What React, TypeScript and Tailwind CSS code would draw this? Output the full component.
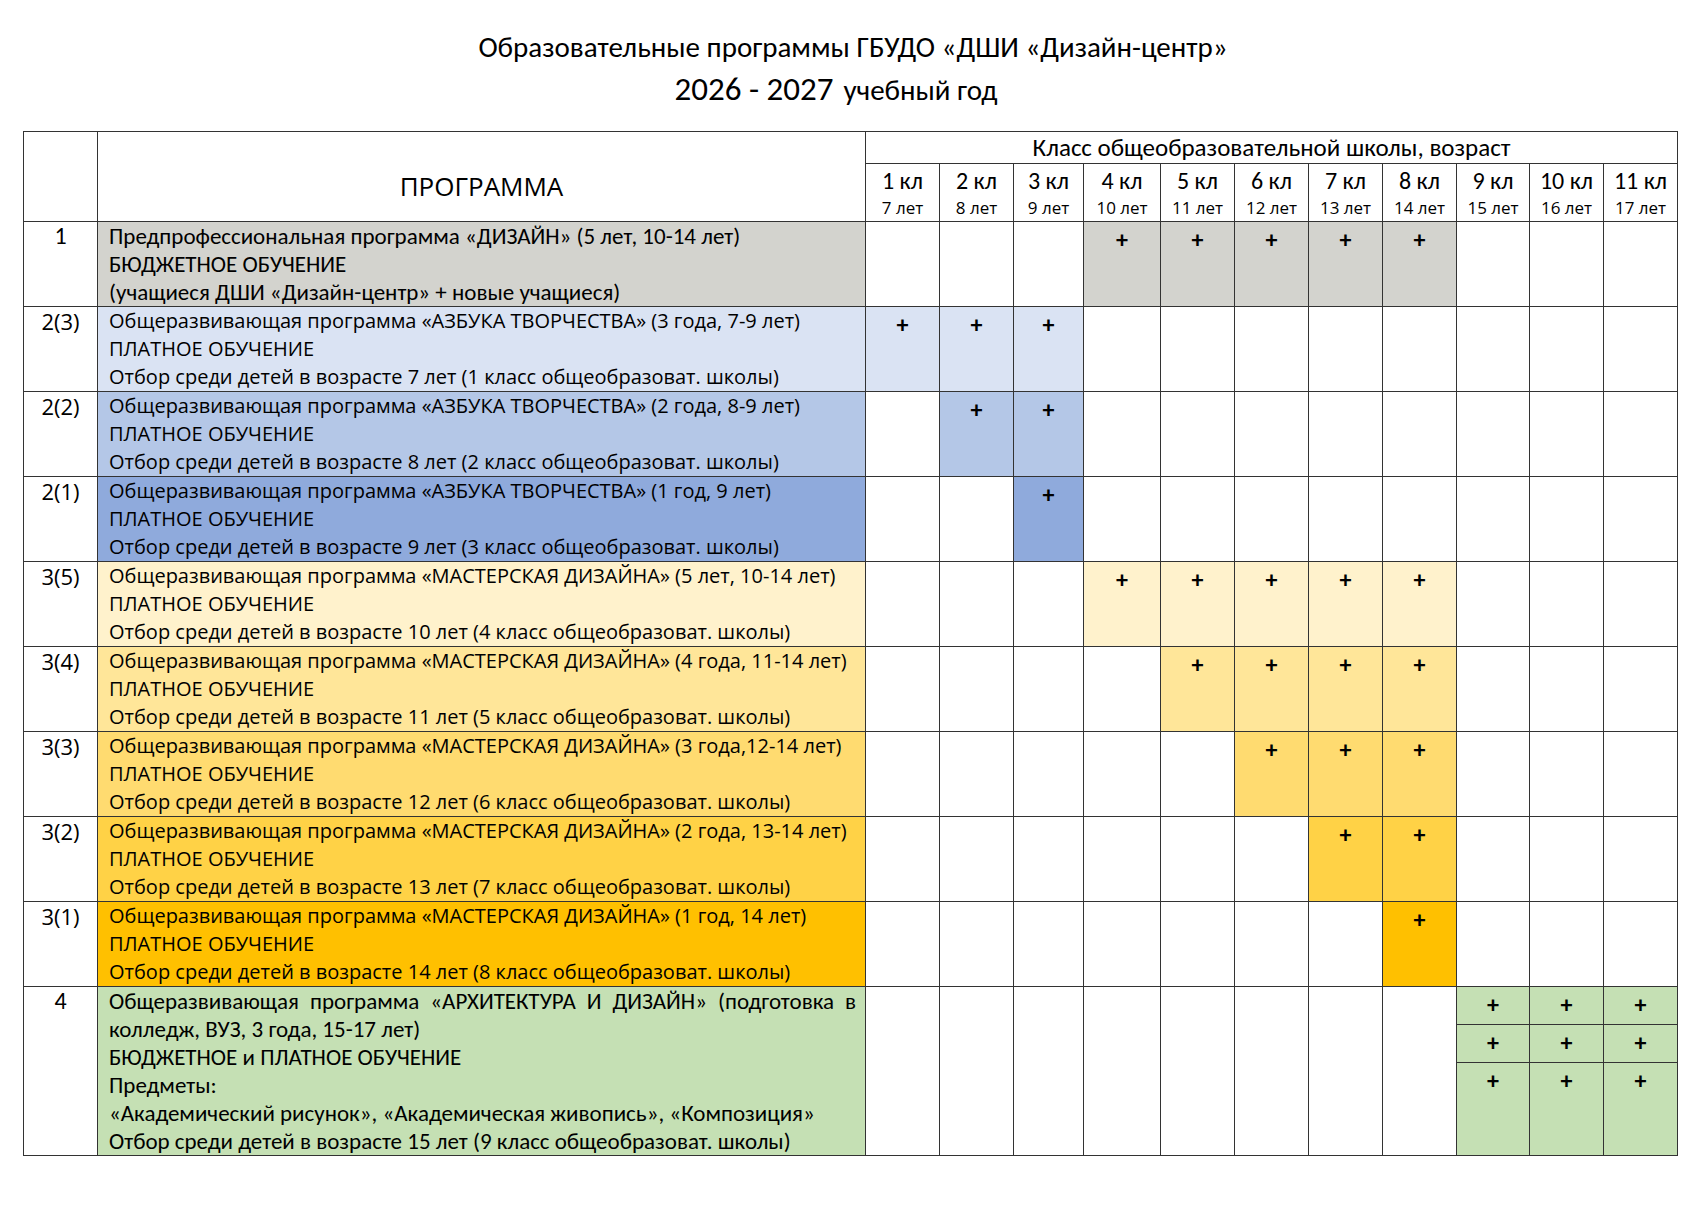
import type { ReactNode } from 'react'

const NARROW = "font-['Carlito','Liberation_Sans_Narrow','Liberation_Sans',sans-serif]"
const WIDE = "font-['Open_Sans',sans-serif]"

type Row = {
  num: string
  narrow?: boolean
  bg: string
  lines: string[]
  cols: number[]
}

const rows: Row[] = [
  {
    num: '1',
    narrow: true,
    bg: 'bg-[#d3d3ce]',
    lines: [
      'Предпрофессиональная программа «ДИЗАЙН» (5 лет, 10-14 лет)',
      'БЮДЖЕТНОЕ ОБУЧЕНИЕ',
      '(учащиеся ДШИ «Дизайн-центр» + новые учащиеся)',
    ],
    cols: [4, 5, 6, 7, 8],
  },
  {
    num: '2(3)',
    bg: 'bg-[#dae3f3]',
    lines: [
      'Общеразвивающая программа «АЗБУКА ТВОРЧЕСТВА» (3 года, 7-9 лет)',
      'ПЛАТНОЕ ОБУЧЕНИЕ',
      'Отбор среди детей в возрасте 7 лет (1 класс общеобразоват. школы)',
    ],
    cols: [1, 2, 3],
  },
  {
    num: '2(2)',
    bg: 'bg-[#b4c7e7]',
    lines: [
      'Общеразвивающая программа «АЗБУКА ТВОРЧЕСТВА» (2 года, 8-9 лет)',
      'ПЛАТНОЕ ОБУЧЕНИЕ',
      'Отбор среди детей в возрасте 8 лет (2 класс общеобразоват. школы)',
    ],
    cols: [2, 3],
  },
  {
    num: '2(1)',
    bg: 'bg-[#8faadc]',
    lines: [
      'Общеразвивающая программа «АЗБУКА ТВОРЧЕСТВА» (1 год, 9 лет)',
      'ПЛАТНОЕ ОБУЧЕНИЕ',
      'Отбор среди детей в возрасте 9 лет (3 класс общеобразоват. школы)',
    ],
    cols: [3],
  },
  {
    num: '3(5)',
    bg: 'bg-[#fff2cc]',
    lines: [
      'Общеразвивающая программа «МАСТЕРСКАЯ ДИЗАЙНА» (5 лет, 10-14 лет)',
      'ПЛАТНОЕ ОБУЧЕНИЕ',
      'Отбор среди детей в возрасте 10 лет (4 класс общеобразоват. школы)',
    ],
    cols: [4, 5, 6, 7, 8],
  },
  {
    num: '3(4)',
    bg: 'bg-[#ffe699]',
    lines: [
      'Общеразвивающая программа «МАСТЕРСКАЯ ДИЗАЙНА» (4 года, 11-14 лет)',
      'ПЛАТНОЕ ОБУЧЕНИЕ',
      'Отбор среди детей в возрасте 11 лет (5 класс общеобразоват. школы)',
    ],
    cols: [5, 6, 7, 8],
  },
  {
    num: '3(3)',
    bg: 'bg-[#ffdb70]',
    lines: [
      'Общеразвивающая программа «МАСТЕРСКАЯ ДИЗАЙНА» (3 года,12-14 лет)',
      'ПЛАТНОЕ ОБУЧЕНИЕ',
      'Отбор среди детей в возрасте 12 лет (6 класс общеобразоват. школы)',
    ],
    cols: [6, 7, 8],
  },
  {
    num: '3(2)',
    bg: 'bg-[#ffd246]',
    lines: [
      'Общеразвивающая программа «МАСТЕРСКАЯ ДИЗАЙНА» (2 года, 13-14 лет)',
      'ПЛАТНОЕ ОБУЧЕНИЕ',
      'Отбор среди детей в возрасте 13 лет (7 класс общеобразоват. школы)',
    ],
    cols: [7, 8],
  },
  {
    num: '3(1)',
    bg: 'bg-[#ffc000]',
    lines: [
      'Общеразвивающая программа «МАСТЕРСКАЯ ДИЗАЙНА» (1 год, 14 лет)',
      'ПЛАТНОЕ ОБУЧЕНИЕ',
      'Отбор среди детей в возрасте 14 лет (8 класс общеобразоват. школы)',
    ],
    cols: [8],
  },
]

const grades = [
  { kl: '1 кл', age: '7 лет' },
  { kl: '2 кл', age: '8 лет' },
  { kl: '3 кл', age: '9 лет' },
  { kl: '4 кл', age: '10 лет' },
  { kl: '5 кл', age: '11 лет' },
  { kl: '6 кл', age: '12 лет' },
  { kl: '7 кл', age: '13 лет' },
  { kl: '8 кл', age: '14 лет' },
  { kl: '9 кл', age: '15 лет' },
  { kl: '10 кл', age: '16 лет' },
  { kl: '11 кл', age: '17 лет' },
]

const gradeWidths = ['w-[74px]', 'w-[74px]', 'w-[70px]', 'w-[77px]', 'w-[74px]', 'w-[74px]', 'w-[74px]', 'w-[74px]', 'w-[73px]', 'w-[74px]', 'w-[74px]']

const line = 'border border-[#333333]'
const cell = `${line} p-0 align-top`

function Plus() {
  return <div className="pt-[4px] text-center text-[24px] font-semibold leading-[28px] text-black">+</div>
}

function Cell({ bg, children, className = '', rowSpan }: { bg?: string; children?: ReactNode; className?: string; rowSpan?: number }) {
  return (
    <td rowSpan={rowSpan} className={`${cell} ${bg ?? 'bg-white'} ${className}`}>
      {children}
    </td>
  )
}

export default function App() {
  return (
    <div className={`min-h-screen bg-white text-black ${NARROW}`}>
      <div className="pt-[30px] text-center">
        <p className="text-[29px] leading-[34px]">Образовательные программы ГБУДО «ДШИ «Дизайн-центр»</p>
        <p className="mt-[6px] pr-[34px] leading-[38px]">
          <span className="text-[33px]">2026 - 2027</span>
          <span className="ml-[10px] text-[29px]">учебный год</span>
        </p>
      </div>

      <div className="mt-[17px] pl-[23px]">
        <table className="w-[1654px] table-fixed border-collapse">
          <colgroup>
            <col className="w-[74px]" />
            <col className="w-[768px]" />
            {gradeWidths.map((w, i) => (
              <col key={i} className={w} />
            ))}
          </colgroup>
          <thead>
            <tr className="h-[32px]">
              <th rowSpan={2} className={`${line} bg-white`} />
              <th rowSpan={2} className={`${line} bg-white text-center align-middle text-[26px] font-normal ${WIDE}`}>
                <span className="relative top-[10px]">ПРОГРАММА</span>
              </th>
              <th colSpan={11} className={`${line} bg-white text-center align-middle text-[25px] font-normal leading-[30px]`}>
                Класс общеобразовательной школы, возраст
              </th>
            </tr>
            <tr className="h-[58px]">
              {grades.map((g) => (
                <th key={g.kl} className={`${line} bg-white px-0 text-center align-middle font-normal`}>
                  <div className="text-[24px] leading-[27px]">{g.kl}</div>
                  <div className={`pt-[3px] text-[17px] leading-[22px] ${WIDE}`}>{g.age}</div>
                </th>
              ))}
            </tr>
          </thead>
          <tbody>
            {rows.map((r) => {
              const font = r.narrow ? `${NARROW} text-[23px]` : `${WIDE} text-[20px]`
              return (
                <tr key={r.num} className="h-[84px]">
                  <Cell className={`text-center leading-[28px] ${r.narrow ? `${NARROW} text-[24px]` : `${WIDE} text-[22px]`}`}>
                    <div>{r.num}</div>
                  </Cell>
                  <Cell bg={r.bg} className={`px-[11px] leading-[28px] ${font}`}>
                    {r.lines.map((l) => (
                      <div key={l} className="whitespace-nowrap">
                        {l}
                      </div>
                    ))}
                  </Cell>
                  {grades.map((_, i) => {
                    const on = r.cols.includes(i + 1)
                    return (
                      <Cell key={i} bg={on ? r.bg : undefined}>
                        {on ? <Plus /> : null}
                      </Cell>
                    )
                  })}
                </tr>
              )
            })}

            <tr className="h-[38px]">
              <Cell rowSpan={3} className="text-center text-[24px] leading-[28px]">
                <div>4</div>
              </Cell>
              <Cell rowSpan={3} bg="bg-[#c5e0b4]" className="px-[11px] pr-[9px] text-[23px] leading-[28px]">
                <div className="text-justify [text-align-last:justify]">
                  Общеразвивающая программа «АРХИТЕКТУРА И ДИЗАЙН» (подготовка в
                </div>
                <div>колледж, ВУЗ, 3 года, 15-17 лет)</div>
                <div>БЮДЖЕТНОЕ и ПЛАТНОЕ ОБУЧЕНИЕ</div>
                <div>Предметы:</div>
                <div className="whitespace-nowrap">«Академический рисунок», «Академическая живопись», «Композиция»</div>
                <div className="whitespace-nowrap">Отбор среди детей в возрасте 15 лет (9 класс общеобразоват. школы)</div>
              </Cell>
              {Array.from({ length: 8 }).map((_, i) => (
                <Cell key={i} rowSpan={3} />
              ))}
              {[0, 1, 2].map((i) => (
                <Cell key={i} bg="bg-[#c5e0b4]">
                  <Plus />
                </Cell>
              ))}
            </tr>
            <tr className="h-[38px]">
              {[0, 1, 2].map((i) => (
                <Cell key={i} bg="bg-[#c5e0b4]">
                  <Plus />
                </Cell>
              ))}
            </tr>
            <tr className="h-[92px]">
              {[0, 1, 2].map((i) => (
                <Cell key={i} bg="bg-[#c5e0b4]">
                  <Plus />
                </Cell>
              ))}
            </tr>
          </tbody>
        </table>
      </div>
    </div>
  )
}
